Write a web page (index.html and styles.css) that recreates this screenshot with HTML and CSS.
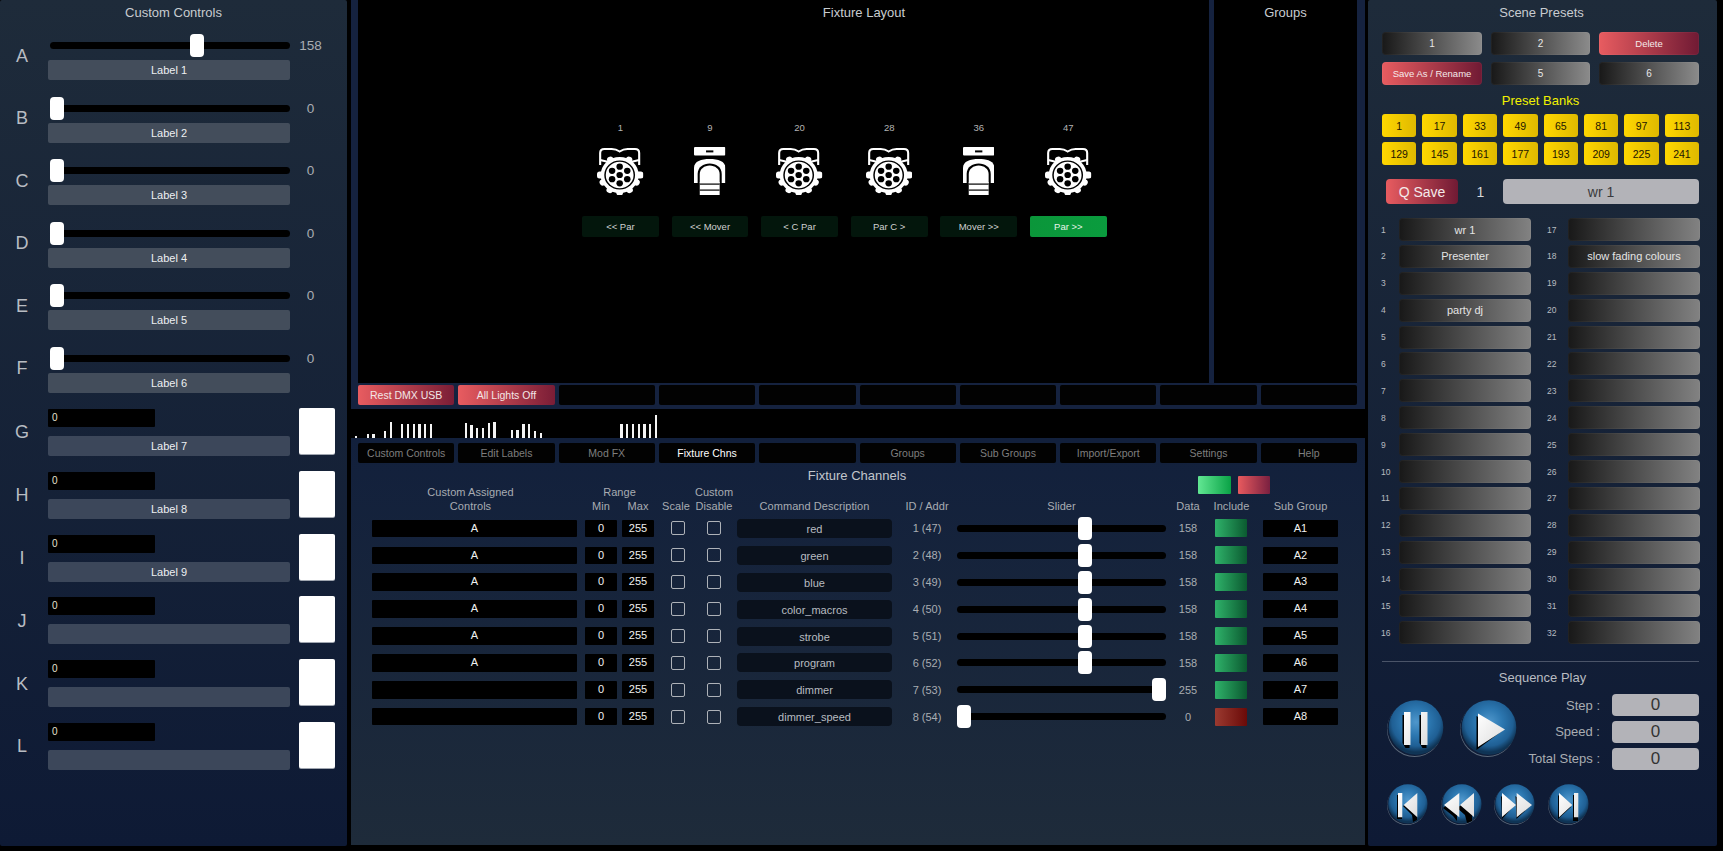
FILE: index.html
```html
<!DOCTYPE html>
<html lang="en">
<head>
<meta charset="utf-8">
<title>Lighting Console</title>
<link rel="stylesheet" href="styles.css">
</head>
<body>
<svg class="defs" aria-hidden="true">
  <defs>
    <radialGradient id="sphere" cx="50%" cy="40%" r="55%">
      <stop offset="0" stop-color="#4f97cc"/>
      <stop offset=".45" stop-color="#2c77b0"/>
      <stop offset=".8" stop-color="#1f5f94"/>
      <stop offset="1" stop-color="#0f3455"/>
    </radialGradient>
    <linearGradient id="glyph" x1="0" x2="1" y1="0" y2="1">
      <stop offset="0" stop-color="#ffffff"/>
      <stop offset="1" stop-color="#dcdcdc"/>
    </linearGradient>
    <symbol id="ball" viewBox="0 0 57 57">
      <circle cx="27.5" cy="29.5" r="27.5" fill="#5d6a7a"/>
      <circle cx="27.8" cy="28.6" r="27.5" fill="#0f1d38"/>
      <circle cx="29" cy="27.5" r="27.3" fill="url(#sphere)"/>
    </symbol>
    <symbol id="par" viewBox="0 0 44 48" preserveAspectRatio="none">
      <path d="M3 18V6Q3 2 7 2H14Q18 2 21.5 4.5Q25 2 29 2H36Q40 2 40 6V18" fill="none" stroke="#fff" stroke-width="2"/>
      <path d="M3 13L11 15M40 13L32 15" stroke="#fff" stroke-width="2"/>
      <rect x="0" y="24.5" width="8" height="7" rx="2.5" fill="#fff"/>
      <rect x="35" y="24.5" width="9" height="7" rx="2.5" fill="#fff"/>
      <circle cx="21.5" cy="28" r="18" fill="#fff"/>
      <g fill="#fff">
        <circle cx="21.5" cy="10.500" r="3.200" transform="rotate(30 21.5 28)"/>
        <circle cx="21.5" cy="10.500" r="3.200" transform="rotate(-30 21.5 28)"/>
        <circle cx="21.5" cy="10.500" r="3.200" transform="rotate(115 21.5 28)"/>
        <circle cx="21.5" cy="10.500" r="3.200" transform="rotate(-115 21.5 28)"/>
        <circle cx="21.5" cy="10.500" r="3.200" transform="rotate(148 21.5 28)"/>
        <circle cx="21.5" cy="10.500" r="3.200" transform="rotate(-148 21.5 28)"/>
        <circle cx="21.5" cy="10.500" r="3.200" transform="rotate(180 21.5 28)"/>
      </g>
      <circle cx="21.5" cy="28" r="14.6" fill="#000"/>
      <circle cx="21.5" cy="28" r="13.2" fill="#fff"/>
      <g fill="#000">
        <circle cx="21.5" cy="28" r="3.1"/>
        <circle cx="21.5" cy="19.7" r="3.1"/>
        <circle cx="28.7" cy="23.85" r="3.1"/>
        <circle cx="28.7" cy="32.15" r="3.1"/>
        <circle cx="21.5" cy="36.3" r="3.1"/>
        <circle cx="14.3" cy="32.15" r="3.1"/>
        <circle cx="14.3" cy="23.85" r="3.1"/>
      </g>
    </symbol>
    <symbol id="mover" viewBox="0 0 30 48" preserveAspectRatio="none">
      <rect width="30" height="8.5" rx="1" fill="#fff"/>
      <rect x="11.5" y="3.4" width="7" height="2" fill="#000"/>
      <path d="M0 36V21C0 14 7 12 15 12S30 14 30 21V36Z" fill="#fff"/>
      <path d="M3.500 36V27C3.500 20 9 16.500 15 16.500S26.500 20 26.500 27V36Z" fill="#000"/>
      <path d="M5.500 36V27C5.500 22 10 18.500 15 18.500S24.500 22 24.500 27V36Z" fill="#fff"/>
      <rect x="5.500" y="35" width="19" height="13" fill="#fff"/>
      <rect x="5.500" y="36.500" width="19" height="1.200" fill="#000"/>
      <rect x="5.500" y="42.500" width="19" height="1.200" fill="#000"/>
    </symbol>
  </defs>
</svg>

<div class="console">
  <aside class="panel side left">
    <h2 class="title">Custom Controls</h2>
    <div class="ctl-group">
      <div class="ctl"><span class="letter">A</span><div class="ctl-body"><div class="ctl-slide"><input class="range" type="range" min="0" max="255" value="158"></div><div class="ctl-label">Label 1</div></div><span class="ctl-val">158</span></div>
      <div class="ctl"><span class="letter">B</span><div class="ctl-body"><div class="ctl-slide"><input class="range" type="range" min="0" max="255" value="0"></div><div class="ctl-label">Label 2</div></div><span class="ctl-val">0</span></div>
      <div class="ctl"><span class="letter">C</span><div class="ctl-body"><div class="ctl-slide"><input class="range" type="range" min="0" max="255" value="0"></div><div class="ctl-label">Label 3</div></div><span class="ctl-val">0</span></div>
      <div class="ctl"><span class="letter">D</span><div class="ctl-body"><div class="ctl-slide"><input class="range" type="range" min="0" max="255" value="0"></div><div class="ctl-label">Label 4</div></div><span class="ctl-val">0</span></div>
      <div class="ctl"><span class="letter">E</span><div class="ctl-body"><div class="ctl-slide"><input class="range" type="range" min="0" max="255" value="0"></div><div class="ctl-label">Label 5</div></div><span class="ctl-val">0</span></div>
      <div class="ctl"><span class="letter">F</span><div class="ctl-body"><div class="ctl-slide"><input class="range" type="range" min="0" max="255" value="0"></div><div class="ctl-label">Label 6</div></div><span class="ctl-val">0</span></div>
    </div>
    <div class="ctl-group second">
      <div class="ctl"><span class="letter">G</span><div class="ctl-body"><div class="num-field">0</div><div class="ctl-label">Label 7</div></div><span class="swatch"></span></div>
      <div class="ctl"><span class="letter">H</span><div class="ctl-body"><div class="num-field">0</div><div class="ctl-label">Label 8</div></div><span class="swatch"></span></div>
      <div class="ctl"><span class="letter">I</span><div class="ctl-body"><div class="num-field">0</div><div class="ctl-label">Label 9</div></div><span class="swatch"></span></div>
      <div class="ctl"><span class="letter">J</span><div class="ctl-body"><div class="num-field">0</div><div class="ctl-label"></div></div><span class="swatch"></span></div>
      <div class="ctl"><span class="letter">K</span><div class="ctl-body"><div class="num-field">0</div><div class="ctl-label"></div></div><span class="swatch"></span></div>
      <div class="ctl"><span class="letter">L</span><div class="ctl-body"><div class="num-field">0</div><div class="ctl-label"></div></div><span class="swatch"></span></div>
    </div>
  </aside>

  <main class="middle">
    <section class="stage-panel">
      <div class="stage-row">
        <div class="stage">
          <h2 class="title stage-title">Fixture Layout</h2>
          <div class="fixtures">
            <div class="fixture"><span class="fx-num">1</span><svg class="fx-par"><use href="#par"/></svg><button class="fx-btn">&lt;&lt; Par</button></div>
            <div class="fixture"><span class="fx-num">9</span><svg class="fx-mover"><use href="#mover"/></svg><button class="fx-btn">&lt;&lt; Mover</button></div>
            <div class="fixture"><span class="fx-num">20</span><svg class="fx-par"><use href="#par"/></svg><button class="fx-btn">&lt; C Par</button></div>
            <div class="fixture"><span class="fx-num">28</span><svg class="fx-par"><use href="#par"/></svg><button class="fx-btn">Par C &gt;</button></div>
            <div class="fixture"><span class="fx-num">36</span><svg class="fx-mover"><use href="#mover"/></svg><button class="fx-btn">Mover &gt;&gt;</button></div>
            <div class="fixture"><span class="fx-num">47</span><svg class="fx-par"><use href="#par"/></svg><button class="fx-btn on">Par &gt;&gt;</button></div>
          </div>
        </div>
        <div class="groups"><h2 class="title">Groups</h2></div>
      </div>
      <div class="tabrow actions">
        <button class="tab red">Rest DMX USB</button>
        <button class="tab red">All Lights Off</button>
        <button class="tab"></button><button class="tab"></button><button class="tab"></button><button class="tab"></button><button class="tab"></button><button class="tab"></button><button class="tab"></button><button class="tab"></button>
      </div>
    </section>

    <div class="meter">
      <i style="height:2px"></i><i></i><i style="height:4px"></i><i style="height:4px"></i><i></i><i style="height:7px"></i><i style="height:16px"></i><i></i><i style="height:14px"></i><i style="height:14px"></i><i style="height:14px"></i><i style="height:14px"></i><i style="height:14px"></i><i style="height:14px"></i><i></i><i></i><i></i><i></i><i></i><i style="height:15px"></i><i style="height:13px"></i><i style="height:10px"></i><i style="height:10px"></i><i style="height:15px"></i><i style="height:16px"></i><i></i><i></i><i style="height:8px"></i><i style="height:8px"></i><i style="height:14px"></i><i style="height:14px"></i><i style="height:7px"></i><i style="height:5px"></i><i></i><i></i><i></i><i></i><i></i><i></i><i></i><i></i><i></i><i></i><i></i><i></i><i></i><i style="height:14px"></i><i style="height:14px"></i><i style="height:14px"></i><i style="height:14px"></i><i style="height:14px"></i><i style="height:14px"></i><i style="height:23px"></i>
    </div>

    <section class="work-panel">
      <div class="tabrow tabs">
        <button class="tab">Custom Controls</button>
        <button class="tab">Edit Labels</button>
        <button class="tab">Mod FX</button>
        <button class="tab active">Fixture Chns</button>
        <button class="tab"></button>
        <button class="tab">Groups</button>
        <button class="tab">Sub Groups</button>
        <button class="tab">Import/Export</button>
        <button class="tab">Settings</button>
        <button class="tab">Help</button>
      </div>
      <h2 class="title work-title">Fixture Channels</h2>
      <div class="chn-head">
        <span class="h-assign">Custom Assigned<br>Controls</span>
        <span class="h-range">Range</span>
        <span class="h-min">Min</span>
        <span class="h-max">Max</span>
        <span class="h-scale">Scale</span>
        <span class="h-dis">Custom<br>Disable</span>
        <span class="h-desc">Command Description</span>
        <span class="h-id">ID / Addr</span>
        <span class="h-slider">Slider</span>
        <span class="h-data">Data</span>
        <span class="h-inc">Include</span>
        <span class="h-sub">Sub Group</span>
        <div class="mini-btns"><button class="mini green"></button><button class="mini rose"></button></div>
      </div>
      <div class="chn-row"><div class="fld assign">A</div><div class="fld rng">0</div><div class="fld rng">255</div><input class="chk" type="checkbox"><input class="chk" type="checkbox"><div class="desc">red</div><div class="cell">1 (47)</div><input class="range wide" type="range" min="0" max="255" value="158"><div class="cell">158</div><div class="inc"></div><div class="fld sub">A1</div></div>
      <div class="chn-row"><div class="fld assign">A</div><div class="fld rng">0</div><div class="fld rng">255</div><input class="chk" type="checkbox"><input class="chk" type="checkbox"><div class="desc">green</div><div class="cell">2 (48)</div><input class="range wide" type="range" min="0" max="255" value="158"><div class="cell">158</div><div class="inc"></div><div class="fld sub">A2</div></div>
      <div class="chn-row"><div class="fld assign">A</div><div class="fld rng">0</div><div class="fld rng">255</div><input class="chk" type="checkbox"><input class="chk" type="checkbox"><div class="desc">blue</div><div class="cell">3 (49)</div><input class="range wide" type="range" min="0" max="255" value="158"><div class="cell">158</div><div class="inc"></div><div class="fld sub">A3</div></div>
      <div class="chn-row"><div class="fld assign">A</div><div class="fld rng">0</div><div class="fld rng">255</div><input class="chk" type="checkbox"><input class="chk" type="checkbox"><div class="desc">color_macros</div><div class="cell">4 (50)</div><input class="range wide" type="range" min="0" max="255" value="158"><div class="cell">158</div><div class="inc"></div><div class="fld sub">A4</div></div>
      <div class="chn-row"><div class="fld assign">A</div><div class="fld rng">0</div><div class="fld rng">255</div><input class="chk" type="checkbox"><input class="chk" type="checkbox"><div class="desc">strobe</div><div class="cell">5 (51)</div><input class="range wide" type="range" min="0" max="255" value="158"><div class="cell">158</div><div class="inc"></div><div class="fld sub">A5</div></div>
      <div class="chn-row"><div class="fld assign">A</div><div class="fld rng">0</div><div class="fld rng">255</div><input class="chk" type="checkbox"><input class="chk" type="checkbox"><div class="desc">program</div><div class="cell">6 (52)</div><input class="range wide" type="range" min="0" max="255" value="158"><div class="cell">158</div><div class="inc"></div><div class="fld sub">A6</div></div>
      <div class="chn-row"><div class="fld assign"></div><div class="fld rng">0</div><div class="fld rng">255</div><input class="chk" type="checkbox"><input class="chk" type="checkbox"><div class="desc">dimmer</div><div class="cell">7 (53)</div><input class="range wide" type="range" min="0" max="255" value="255"><div class="cell">255</div><div class="inc"></div><div class="fld sub">A7</div></div>
      <div class="chn-row"><div class="fld assign"></div><div class="fld rng">0</div><div class="fld rng">255</div><input class="chk" type="checkbox"><input class="chk" type="checkbox"><div class="desc">dimmer_speed</div><div class="cell">8 (54)</div><input class="range wide" type="range" min="0" max="255" value="0"><div class="cell">0</div><div class="inc off"></div><div class="fld sub">A8</div></div>
    </section>
  </main>

  <aside class="panel side right">
    <h2 class="title right-title">Scene Presets</h2>
    <div class="scene-grid">
      <button class="gbtn">1</button><button class="gbtn">2</button><button class="gbtn redbtn">Delete</button>
      <button class="gbtn redbtn">Save As / Rename</button><button class="gbtn">5</button><button class="gbtn">6</button>
    </div>
    <h3 class="banks-title">Preset Banks</h3>
    <div class="banks">
      <button class="bank">1</button><button class="bank">17</button><button class="bank">33</button><button class="bank">49</button><button class="bank">65</button><button class="bank">81</button><button class="bank">97</button><button class="bank">113</button>
      <button class="bank">129</button><button class="bank">145</button><button class="bank">161</button><button class="bank">177</button><button class="bank">193</button><button class="bank">209</button><button class="bank">225</button><button class="bank">241</button>
    </div>
    <div class="qrow">
      <button class="qsave">Q Save</button>
      <span class="qnum">1</span>
      <div class="qname">wr 1</div>
    </div>
    <div class="presets">
      <div class="pre"><span>1</span><button class="gbtn">wr 1</button></div>
      <div class="pre"><span>2</span><button class="gbtn">Presenter</button></div>
      <div class="pre"><span>3</span><button class="gbtn"></button></div>
      <div class="pre"><span>4</span><button class="gbtn">party dj</button></div>
      <div class="pre"><span>5</span><button class="gbtn"></button></div>
      <div class="pre"><span>6</span><button class="gbtn"></button></div>
      <div class="pre"><span>7</span><button class="gbtn"></button></div>
      <div class="pre"><span>8</span><button class="gbtn"></button></div>
      <div class="pre"><span>9</span><button class="gbtn"></button></div>
      <div class="pre"><span>10</span><button class="gbtn"></button></div>
      <div class="pre"><span>11</span><button class="gbtn"></button></div>
      <div class="pre"><span>12</span><button class="gbtn"></button></div>
      <div class="pre"><span>13</span><button class="gbtn"></button></div>
      <div class="pre"><span>14</span><button class="gbtn"></button></div>
      <div class="pre"><span>15</span><button class="gbtn"></button></div>
      <div class="pre"><span>16</span><button class="gbtn"></button></div>
      <div class="pre"><span>17</span><button class="gbtn"></button></div>
      <div class="pre"><span>18</span><button class="gbtn">slow fading colours</button></div>
      <div class="pre"><span>19</span><button class="gbtn"></button></div>
      <div class="pre"><span>20</span><button class="gbtn"></button></div>
      <div class="pre"><span>21</span><button class="gbtn"></button></div>
      <div class="pre"><span>22</span><button class="gbtn"></button></div>
      <div class="pre"><span>23</span><button class="gbtn"></button></div>
      <div class="pre"><span>24</span><button class="gbtn"></button></div>
      <div class="pre"><span>25</span><button class="gbtn"></button></div>
      <div class="pre"><span>26</span><button class="gbtn"></button></div>
      <div class="pre"><span>27</span><button class="gbtn"></button></div>
      <div class="pre"><span>28</span><button class="gbtn"></button></div>
      <div class="pre"><span>29</span><button class="gbtn"></button></div>
      <div class="pre"><span>30</span><button class="gbtn"></button></div>
      <div class="pre"><span>31</span><button class="gbtn"></button></div>
      <div class="pre"><span>32</span><button class="gbtn"></button></div>
    </div>
    <hr class="rule">
    <div class="seq-title">Sequence Play</div>
    <div class="seq">
      <div class="transport">
        <div class="big-row">
          <svg class="ball-big" viewBox="0 0 57 57"><use href="#ball" width="57" height="57"/><path d="M15.500 15h7v33h-4l-3-5zM32.500 15h7v33h-4l-3-5z" fill="#000"/><path d="M17 12h6.500v33H17zM34 12h6.500v33H34z" fill="url(#glyph)"/></svg>
          <svg class="ball-big" viewBox="0 0 57 57"><use href="#ball" width="57" height="57"/><path d="M16.500 16L42 31 16.500 50z" fill="#000"/><path d="M18 13.500L45 29.500 18 47z" fill="url(#glyph)"/></svg>
        </div>
        <div class="small-row">
          <svg class="ball-small" viewBox="0 0 41 41"><use href="#ball" width="41" height="41"/><path d="M10 11h5v24h-5zM30 12v24l-4 2-1-7-9-9z" fill="#000"/><path d="M11 9h4.300v24.300H11zM30.300 9v24.300L16.700 21z" fill="url(#glyph)"/></svg>
          <svg class="ball-small" viewBox="0 0 41 41"><use href="#ball" width="41" height="41"/><path d="M16 13v24l-4-5-10-8zM31 13v24l-5 2-2-8-8-7z" fill="#000"/><path d="M18.300 9v24.300L3 21zM33 9v24L19 21z" fill="url(#glyph)"/></svg>
          <svg class="ball-small" viewBox="0 0 41 41"><use href="#ball" width="41" height="41"/><path d="M7 12l12 11L8 35zM21.500 12L35 23 22.500 35z" fill="#000"/><path d="M8 9l14 12L8 33zM22.700 9L38 21 22.700 33.300z" fill="url(#glyph)"/></svg>
          <svg class="ball-small" viewBox="0 0 41 41"><use href="#ball" width="41" height="41"/><path d="M10 11v24l13-12zM25 11h5v26h-5z" fill="#000"/><path d="M11 9v24.300L24.300 21zM26 9h4.300v24.300H26z" fill="url(#glyph)"/></svg>
        </div>
      </div>
      <div class="steps">
        <span class="step-l">Step :</span><div class="step-v">0</div>
        <span class="step-l">Speed :</span><div class="step-v">0</div>
        <span class="step-l">Total Steps :</span><div class="step-v">0</div>
      </div>
    </div>
  </aside>
</div>
</body>
</html>
```
FILE: styles.css
```css
* { box-sizing: border-box; }
html, body { margin: 0; height: 100%; background: #000; overflow: hidden; }
body { font-family: "Liberation Sans", Arial, sans-serif; font-size: 11px; color: #c8c8c8; }
button { font: inherit; color: inherit; border: 0; padding: 0; cursor: pointer; }
.defs { position: absolute; width: 0; height: 0; }

.console { display: flex; width: 1723px; height: 851px; align-items: flex-start; }
.panel { height: 846px; border-radius: 2px; background: linear-gradient(#1e2b3a, #0e1a35); }
.title { margin: 0; height: 24px; font-size: 13px; font-weight: 400; line-height: 26px; text-align: center; color: #c8ccd0; }
.right-title { padding-left: 2px; }

/* Left: custom controls */
.left { width: 347px; padding-top: 0; }
.ctl-group { display: flex; flex-direction: column; gap: 16.6px; margin-top: 10px; }
.ctl-group.second { margin-top: 15px; gap: 14.8px; }
.ctl { display: flex; height: 46px; padding-right: 12px; }
.second .ctl { height: 48px; }
.letter { width: 44px; flex: none; margin-right: 4px; align-self: center; padding-bottom: 2px; text-align: center; font-size: 18px; color: #b8bcc2; }
.second .letter { padding-bottom: 0; padding-top: 2px; }
.ctl-body { width: 242px; flex: none; display: flex; flex-direction: column; justify-content: space-between; }
.ctl-slide { height: 23px; padding-left: 2px; }
.ctl-val { flex: 1; text-align: center; font-size: 13.5px; color: #a9adb2; line-height: 23px; padding-right: 4px; }
.ctl-label { height: 20px; background: #434d5b; border-radius: 2px; text-align: center; line-height: 20px; color: #eef0f2; font-size: 11px; }
.second .ctl-label { background: #3c475a; }
.num-field { width: 107px; height: 18px; margin-top: 1px; background: #000; border-radius: 1px; padding-left: 4px; line-height: 17px; font-size: 10px; color: #e6e0cf; }
.swatch { width: 36px; height: 46px; margin-left: 9px; background: #fff; border-radius: 2px; box-shadow: 0 1px 0 #a0a6b0; }

/* Range slider */
.range { appearance: none; -webkit-appearance: none; display: block; width: 240px; height: 23px; margin: 0; background: transparent; }
.range::-webkit-slider-runnable-track { height: 7px; background: #000; border-radius: 4px; }
.range::-webkit-slider-thumb { -webkit-appearance: none; width: 14px; height: 23px; margin-top: -8px; background: #fff; border-radius: 4px; border: 0; }
.range.wide { width: 209px; margin-left: 0; }

/* Middle */
.middle { width: 1014px; margin-left: 4px; margin-right: 3px; display: flex; flex-direction: column; }
.stage-panel { height: 409px; padding: 0 8px 0 7px; background: #15223f; }
.stage-row { display: flex; height: 383px; justify-content: space-between; }
.stage { width: 851px; background: #000; }
.stage-title { padding-left: 161px; }
.groups { width: 143px; background: #000; }
.fixtures { display: flex; gap: 12.8px; padding-left: 224px; margin-top: 97px; }
.fixture { width: 76.8px; display: flex; flex-direction: column; align-items: center; }
.fx-num { height: 14px; line-height: 14px; font-size: 9.5px; color: #b4b4b4; }
.fx-par { width: 46.4px; height: 48px; margin-top: 12px; }
.fx-mover { width: 31.4px; height: 48px; margin-top: 12px; }
.fx-btn { width: 76.8px; height: 21px; margin-top: 21px; background: #03160c; font-size: 9.5px; color: #d0d0d0; border-radius: 2px; }
.fx-btn.on { background: linear-gradient(90deg, #0b963a, #0a9c3e); color: #e8f4ea; }

.tabrow { display: grid; grid-template-columns: repeat(10, 1fr); gap: 4px; height: 20px; }
.actions { margin-top: 2px; }
.tabs { margin: 5px 8px 0 7px; }
.tab { background: #020202; border-radius: 2px; color: #7e7e7e; font-size: 10.5px; }
.tab.red { background: linear-gradient(90deg, #e85c60, #7a1d36); color: #f3e6e6; }
.tab.active { color: #fff; }

.meter { display: flex; align-items: flex-end; height: 29px; padding-left: 4px; background: #000; }
.meter i { flex: none; width: 2.3px; height: 0; margin-right: 3.47px; background: #f4f4f4; }

.work-panel { height: 407px; background: linear-gradient(#12203c, #1e2b3a); }
.work-title { height: 18px; color: #c2c6cc; margin-bottom: 4px; padding-right: 2px; }

.chn-head, .chn-row { display: grid; padding-left: 21px; grid-template-columns: 213px 37px 32px 48px 24px 173px 56px 213px 40px 47px 91px; justify-items: center; align-items: center; }
.chn-head { grid-template-rows: 14px 14px; color: #a8acb2; font-size: 11px; line-height: 14px; text-align: center; margin-bottom: 2px; letter-spacing: .05px; }
.h-assign { grid-column: 1; grid-row: 1 / 3; justify-self: start; width: 197px; }
.h-range { grid-column: 2 / 4; grid-row: 1; }
.h-min { grid-column: 2; grid-row: 2; justify-self: start; width: 32px; }
.h-max { grid-column: 3; grid-row: 2; }
.h-scale { grid-column: 4; grid-row: 2; padding-right: 4px; }
.h-dis { grid-column: 5; grid-row: 1 / 3; white-space: nowrap; }
.h-desc { grid-column: 6; grid-row: 2; white-space: nowrap; padding-right: 7px; padding-left: 11px; width: 173px; }
.h-id { grid-column: 7; grid-row: 2; white-space: nowrap; }
.h-slider { grid-column: 8; grid-row: 2; }
.h-data { grid-column: 9; grid-row: 2; }
.h-inc { grid-column: 10; grid-row: 2; white-space: nowrap; }
.h-sub { grid-column: 11; grid-row: 2; white-space: nowrap; }
.mini-btns { grid-column: 9 / 12; grid-row: 1; justify-self: start; align-self: start; display: flex; gap: 7px; margin: -9px 0 0 30px; }
.mini { width: 32.5px; height: 18px; border-radius: 1px; }
.mini.green { background: linear-gradient(90deg, #62e793, #0aa246); }
.mini.rose { background: linear-gradient(90deg, #e85a5e, #7a2040); }

.chn-row { height: 26.9px; }
.fld { height: 17.5px; background: #000; text-align: center; line-height: 16px; color: #f0f0f0; font-size: 11px; border-radius: 1px; }
.assign { width: 205px; justify-self: start; }
.rng { width: 32px; justify-self: start; }
.sub { width: 75px; justify-self: start; margin-left: 8px; }
.chk { appearance: none; -webkit-appearance: none; width: 14px; height: 14px; margin: 0; border: 1px solid #aeb2b8; border-radius: 2px; background: transparent; }
.desc { width: 155px; height: 19px; justify-self: start; margin-left: 11px; background: #0a111c; border-radius: 4px; text-align: center; line-height: 20px; color: #b8bcc0; }
.cell { color: #a9adb2; }
.inc { width: 32px; height: 18px; justify-self: start; margin-left: 7px; border-radius: 1px; background: linear-gradient(90deg, #2fb26a, #0b5a30); }
.inc.off { background: linear-gradient(90deg, #9b3a30, #6a0a08); }

/* Right */
.right { width: 349px; padding: 0 17px 0 13px; }
.scene-grid { display: grid; grid-template-columns: 100px 99px 100px; gap: 7px 9px; margin: 8px 0 0 1px; }
.scene-grid .gbtn { height: 23px; font-size: 10px; color: #e8e8e8; }
.gbtn { background: linear-gradient(90deg, #181818, #8b8b8b); border-radius: 4px; color: #e4e4e4; box-shadow: inset 0 0 0 1px rgba(255,255,255,.04); }
.redbtn, .scene-grid .redbtn { background: linear-gradient(90deg, #e85c60, #701a34); color: #f5eaea; font-size: 9.5px; }
.banks-title { margin: 0; padding-top: 3px; height: 29px; line-height: 26px; font-size: 13px; font-weight: 400; text-align: center; color: #f2f200; }
.banks { display: grid; grid-template-columns: repeat(8, 34.400px); gap: 5px 6px; margin-left: 1px; }
.bank { height: 23px; border-radius: 3px; font-size: 10.5px; color: #1c1500; background: linear-gradient(90deg, #ffd700, #dfb900); }
.qrow { display: flex; align-items: center; height: 25px; margin: 14px 0 0 5px; }
.qsave { width: 72px; height: 25px; border-radius: 4px; font-size: 14px; color: #f4eaea; background: linear-gradient(90deg, #e85c60, #701a34); }
.qnum { width: 45px; text-align: center; font-size: 14px; color: #d6d8da; }
.qname { width: 196px; height: 25px; border-radius: 4px; background: #b3b3b8; text-align: center; line-height: 26px; font-size: 14px; color: #3a3a3c; }
.presets { display: grid; grid-auto-flow: column; grid-template-rows: repeat(16, 23px); grid-template-columns: 150px 153px; gap: 3.9px 16px; margin-top: 14px; }
.pre { display: flex; justify-content: space-between; align-items: center; }
.pre span { font-size: 8.5px; color: #b8bcc0; }
.pre .gbtn { width: 132px; height: 23px; font-size: 11px; background: linear-gradient(90deg, #181818, #828282); }
.rule { height: 1px; width: 317px; margin: 17px 0 0 1px; border: 0; background: #4a5468; }
.seq-title { height: 18px; margin-top: 7px; line-height: 18px; text-align: center; font-size: 13px; color: #b8bcc2; padding-left: 4px; }
.seq { display: flex; }
.transport { width: 140px; flex: none; padding-left: 6px; }
.big-row { display: flex; gap: 16px; margin-top: 13px; }
.ball-big { width: 57px; height: 57px; flex: none; }
.small-row { display: flex; gap: 12.500px; margin-top: 27px; width: 210px; }
.ball-small { width: 41px; height: 41px; flex: none; }
.steps { display: grid; grid-template-columns: 79px 87px; column-gap: 12px; row-gap: 5.7px; grid-auto-rows: 21.3px; align-items: center; margin-top: 7px; }
.step-l { text-align: right; font-size: 13px; color: #a9adb2; white-space: nowrap; }
.step-v { height: 21.3px; background: #b3b3b8; border-radius: 4px; text-align: center; line-height: 22px; font-size: 17px; color: #333; }
```
